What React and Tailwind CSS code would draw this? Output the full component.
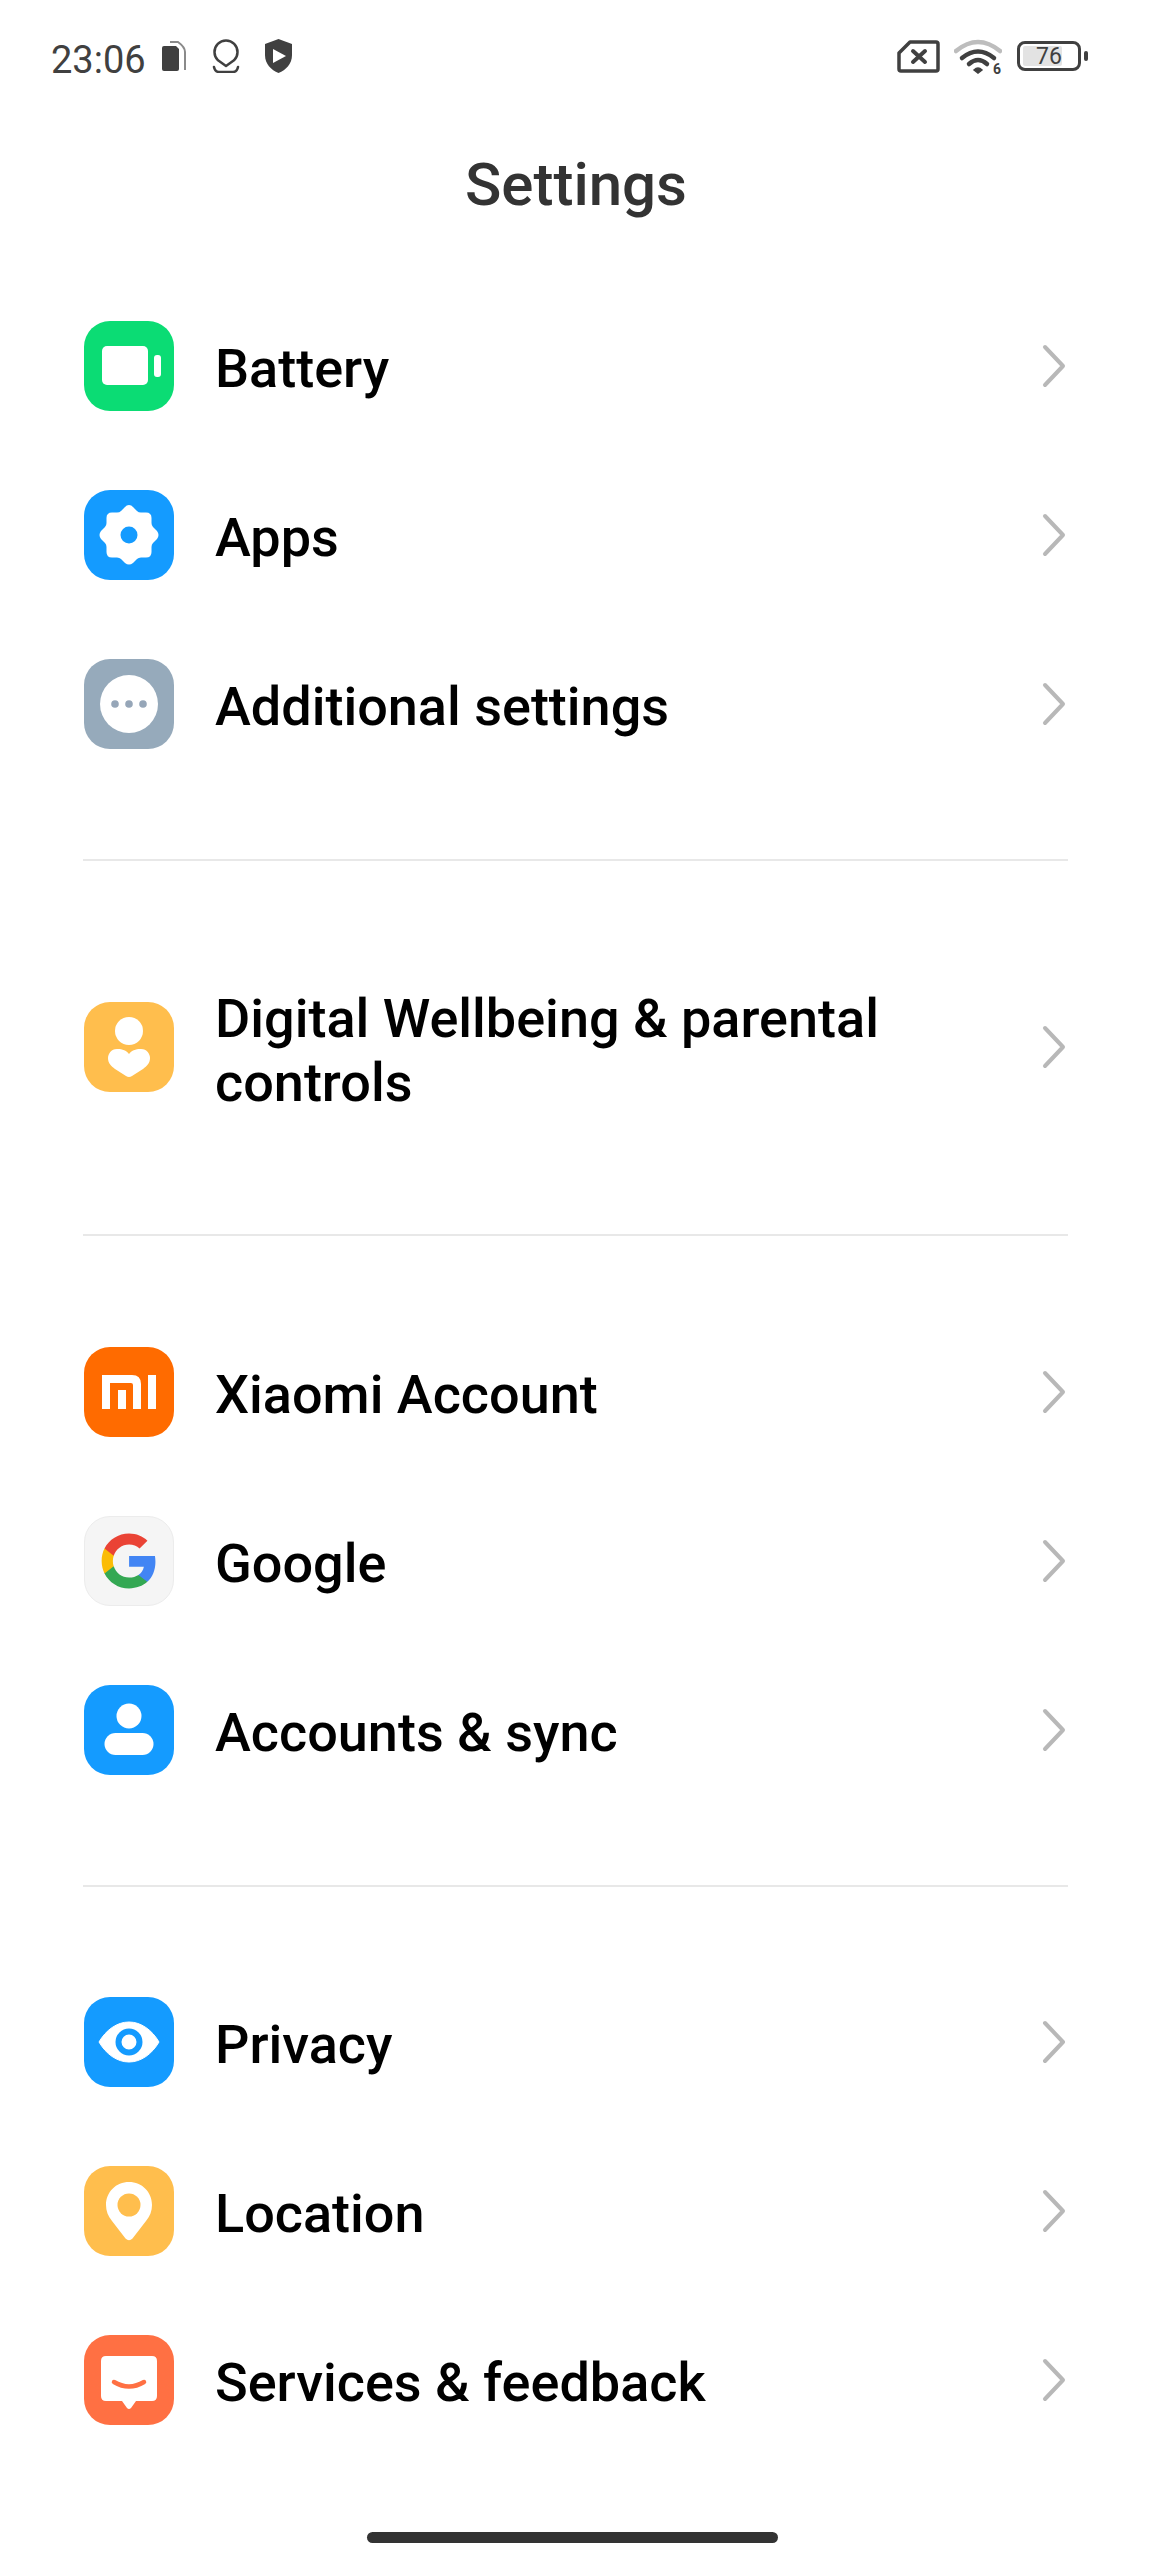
function IconBox({ color, className = "", children }) {
  return (
    <div className={`w-[90px] h-[90px] shrink-0 rounded-[26px] flex items-center justify-center ${color} ${className}`}>
      <svg width="90" height="90" viewBox="0 0 90 90">
        {children}
      </svg>
    </div>
  );
}

const BatteryIcon = () => (
  <IconBox color="bg-[#0bdc74]">
    <rect x="18" y="25" width="46" height="39" rx="5" fill="#fff" />
    <rect x="70" y="34" width="7" height="22" rx="3" fill="#fff" />
  </IconBox>
);

const AppsIcon = () => (
  <IconBox color="bg-[#149bff]">
    <path
      d="M45 15 Q47.500 15 49 17 L53 21 Q54.500 22.500 57 22.500 L62 22.500 Q67.500 22.500 67.500 28 L67.500 33 Q67.500 35.500 69 37 L73 41 Q76 45 73 49 L69 53 Q67.500 54.500 67.500 57 L67.500 62 Q67.500 67.500 62 67.500 L57 67.500 Q54.500 67.500 53 69 L49 73 Q45 76 41 73 L37 69 Q35.500 67.500 33 67.500 L28 67.500 Q22.500 67.500 22.500 62 L22.500 57 Q22.500 54.500 21 53 L17 49 Q14 45 17 41 L21 37 Q22.500 35.500 22.500 33 L22.500 28 Q22.500 22.500 28 22.500 L33 22.500 Q35.500 22.500 37 21 L41 17 Q42.500 15 45 15 Z"
      fill="#fff"
    />
    <circle cx="45" cy="45" r="8.500" fill="#149bff" />
  </IconBox>
);

const MoreIcon = () => (
  <IconBox color="bg-[#96aabb]">
    <circle cx="45" cy="45" r="29" fill="#fff" />
    <circle cx="31" cy="45" r="3.800" fill="#96a6b8" />
    <circle cx="45" cy="45" r="3.800" fill="#96a6b8" />
    <circle cx="59" cy="45" r="3.800" fill="#96a6b8" />
  </IconBox>
);

const WellbeingIcon = () => (
  <IconBox color="bg-[#ffbe4d]">
    <circle cx="45" cy="29" r="14" fill="#fff" />
    <path
      d="M45 52 C49 47 54 47 57 47 C63 47 66 52 66 56 C66 61 63 64 59 67 L48 74 Q45 76 42 74 L31 67 C27 64 24 61 24 56 C24 52 27 47 33 47 C36 47 41 47 45 52 Z"
      fill="#fff"
    />
  </IconBox>
);

const MiIcon = () => (
  <IconBox color="bg-[#ff6b00]">
    <path
      d="M18 28 H48 Q57 28 57 37 V62 H49 V38 Q49 36 47 36 H26 V62 H18 Z M34 43 H42 V62 H34 Z M64 28 H72 V62 H64 Z"
      fill="#fff"
    />
  </IconBox>
);

const GoogleIcon = () => (
  <IconBox color="bg-[#f5f5f5] border border-[#ececec]">
    <g transform="translate(15.800 15.700) scale(1.220)">
      <path fill="#4285F4" d="M46.100 24.600c0-1.700-.2-3.200-.4-4.700H24v8.900h12.400c-.5 2.900-2.200 5.300-4.600 6.900v5.800h7.500c4.300-4 6.800-9.900 6.800-16.900z" />
      <path fill="#34A853" d="M24 47c6.200 0 11.400-2 15.300-5.500l-7.500-5.800c-2.100 1.400-4.700 2.200-7.800 2.200-6 0-11.100-4-12.900-9.500H3.400v6C7.200 41.900 15 47 24 47z" />
      <path fill="#FBBC05" d="M11.100 28.400c-.5-1.400-.7-2.900-.7-4.400s.3-3 .7-4.400v-6H3.400C1.800 16.700 1 20.200 1 24s.9 7.300 2.400 10.400l7.700-6z" />
      <path fill="#EA4335" d="M24 10.100c3.400 0 6.500 1.200 8.800 3.500l6.600-6.600C35.400 3.300 30.200 1 24 1 15 1 7.200 6.100 3.400 13.600l7.700 6c1.800-5.500 6.900-9.500 12.900-9.500z" />
    </g>
  </IconBox>
);

const AccountIcon = () => (
  <IconBox color="bg-[#149bff]">
    <circle cx="45" cy="31" r="12.500" fill="#fff" />
    <rect x="20.500" y="48" width="49" height="22" rx="11" fill="#fff" />
  </IconBox>
);

const EyeIcon = () => (
  <IconBox color="bg-[#149bff]">
    <path d="M15 45 C22 33 33 25 45 25 C57 25 68 33 75 45 C68 57 57 65 45 65 C33 65 22 57 15 45 Z" fill="#fff" stroke="#fff" strokeLinejoin="round" strokeWidth="1" />
    <circle cx="45" cy="45" r="10.500" fill="#fff" stroke="#149bff" strokeWidth="6" />
  </IconBox>
);

const LocationIcon = () => (
  <IconBox color="bg-[#ffbe4d]">
    <path d="M45 16 C58 16 68 26 68 39 C68 45 66 50 62 55 L48.500 72.500 Q45 76 41.500 72.500 L28 55 C24 50 22 45 22 39 C22 26 32 16 45 16 Z" fill="#fff" />
    <circle cx="45" cy="39" r="11.500" fill="#ffbe4d" />
  </IconBox>
);

const FeedbackIcon = () => (
  <IconBox color="bg-[#ff7043]">
    <path d="M22 21 H68 Q73 21 73 26 V61 Q73 66 68 66 H52 L47 73 Q45 75 43 73 L38 66 H22 Q17 66 17 61 V26 Q17 21 22 21 Z" fill="#fff" />
    <path d="M30 47 Q45 56 60 47" fill="none" stroke="#ff7043" strokeWidth="4.500" strokeLinecap="round" />
  </IconBox>
);

const Chevron = () => (
  <svg className="shrink-0 ml-4" width="24" height="44" viewBox="0 0 24 44">
    <path d="M3 3 L21 22 L3 41" fill="none" stroke="#b8b8b8" strokeWidth="4" strokeLinecap="round" strokeLinejoin="round" />
  </svg>
);

function Row({ icon, label, className = "h-[169px]", textClass = "pt-[6px]" }) {
  return (
    <div className={`pl-[84px] pr-[86px] flex items-center ${className}`}>
      {icon}
      <div className={`flex-1 ml-[41px] text-[54px] leading-[64px] font-medium text-black ${textClass}`}>{label}</div>
      <Chevron />
    </div>
  );
}

const Divider = () => <div className="ml-[83px] mr-[84px] h-[2px] bg-[#e8e8e8]" />;

function StatusBar() {
  return (
    <div className="h-[114px] pl-[51px] pr-[64px] pt-[38px] flex items-start text-[#404040]">
      <span className="text-[38px] leading-[44px]">23:06</span>
      <svg className="ml-[16px] mt-[3px]" width="24" height="30" viewBox="0 0 24 30">
        <path d="M2 5 H14 L17 8 V28 Q17 30 15 30 H2 Q0 30 0 28 V7 Q0 5 2 5 Z" fill="#404040" />
        <path d="M8 1 H16 Q23 6 23 11 V29" fill="none" stroke="#8a8a8a" strokeWidth="2" />
      </svg>
      <svg className="ml-[26px] mt-[1px]" width="28" height="34" viewBox="0 0 28 34">
        <path d="M14 27 L6 21.300 A11.500 11.500 0 1 1 22 21.300 Z" fill="none" stroke="#404040" strokeWidth="2.500" strokeLinejoin="round" />
        <path d="M2 28 Q3 33 7 33 H21 Q25 33 26 28" fill="none" stroke="#404040" strokeWidth="2.500" strokeLinecap="round" />
      </svg>
      <svg className="ml-[24px] mt-[1px]" width="29" height="34" viewBox="0 0 29 34">
        <path d="M14.500 0 L28 5 V16 C28 25 22 31 14.500 34 C7 31 1 25 1 16 V5 Z" fill="#404040" />
        <path d="M9 10 L22 17 L9 24 Z" fill="#fff" />
      </svg>
      <div className="flex-1" />
      <svg className="mt-[2px]" width="43" height="33" viewBox="0 0 43 33">
        <path d="M13 2 H39 Q41 2 41 4 V29 Q41 31 39 31 H4 Q2 31 2 29 V13 Z" fill="none" stroke="#404040" strokeWidth="3.500" strokeLinejoin="round" />
        <path d="M16 11 L28 22 M28 11 L16 22" stroke="#404040" strokeWidth="4" strokeLinecap="round" />
      </svg>
      <div className="relative ml-[14px] mt-[1px] w-[48px] h-[36px]">
        <svg width="48" height="36" viewBox="0 0 48 36">
          <path d="M2 12 Q24 -6 46 12" fill="none" stroke="#bdbdbd" strokeWidth="4.500" strokeLinecap="round" />
          <path d="M8 19 Q24 6 40 19" fill="none" stroke="#404040" strokeWidth="4.500" strokeLinecap="round" />
          <path d="M15 25 Q24 17 33 25" fill="none" stroke="#404040" strokeWidth="4.500" strokeLinecap="round" />
          <path d="M20 31 Q24 27 28 31 L24 34 Z" fill="#404040" stroke="#404040" strokeWidth="1.500" />
        </svg>
        <span className="absolute right-[1px] top-[23px] text-[14px] leading-[14px] font-bold">6</span>
      </div>
      <div className="ml-[15px] mt-[3px] w-[64px] h-[30px] rounded-[8px] border-[3px] border-[#404040] relative flex items-center p-[3px]">
        <div className="h-[20px] w-[39px] bg-[#e3e3e3] rounded-[2px]" />
        <span className="absolute inset-0 text-center text-[23px] leading-[26px] text-[#404040]">76</span>
      </div>
      <div className="ml-[3px] mt-[13px] w-[4px] h-[10px] rounded-[2px] bg-[#404040]" />
    </div>
  );
}

export default function App() {
  return (
    <div className="relative w-[1152px] h-[2560px] bg-white overflow-hidden" style={{ fontFamily: "Roboto, sans-serif" }}>
      <StatusBar />
      <h1 className="h-[140px] pt-[36px] text-center text-[60px] leading-[70px] font-medium text-[#333]">Settings</h1>
      <div className="mt-[27px]">
        <Row icon={<BatteryIcon />} label="Battery" />
        <Row icon={<AppsIcon />} label="Apps" />
        <Row icon={<MoreIcon />} label="Additional settings" />
      </div>
      <div className="mt-[71px]">
        <Divider />
      </div>
      <div className="pt-[70px] pb-[71px]">
        <Row icon={<WellbeingIcon />} label="Digital Wellbeing & parental controls" className="h-[231px]" textClass="pt-[8px]" />
      </div>
      <div className="mt-[1px]">
        <Divider />
      </div>
      <div className="mt-[71px]">
        <Row icon={<MiIcon />} label="Xiaomi Account" />
        <Row icon={<GoogleIcon />} label="Google" />
        <Row icon={<AccountIcon />} label="Accounts & sync" />
      </div>
      <div className="mt-[71px]">
        <Divider />
      </div>
      <div className="mt-[70px]">
        <Row icon={<EyeIcon />} label="Privacy" />
        <Row icon={<LocationIcon />} label="Location" />
        <Row icon={<FeedbackIcon />} label="Services & feedback" />
      </div>
      <div className="absolute left-[367px] top-[2532px] w-[411px] h-[11px] rounded-full bg-[#333]" />
    </div>
  );
}
